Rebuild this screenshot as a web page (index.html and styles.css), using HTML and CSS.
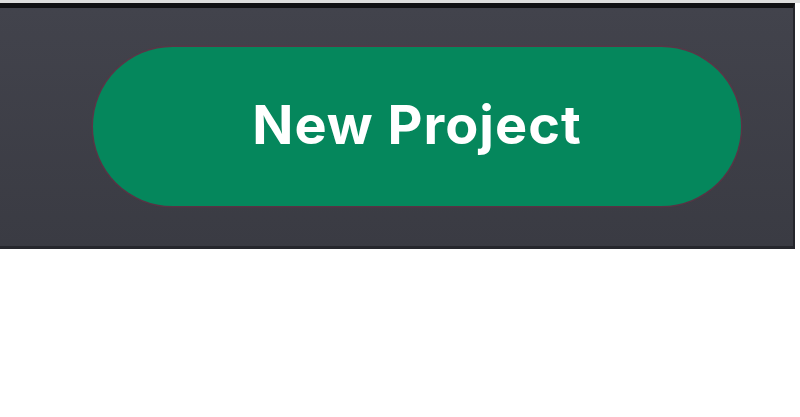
FILE: index.html
```html
<!DOCTYPE html>
<html>
<head>
<meta charset="utf-8">
<link rel="stylesheet" href="styles.css">
</head>
<body>
<div class="page">
  <header class="toolbar">
    <button class="new-project">New Project</button>
  </header>
</div>
</body>
</html>
```
FILE: styles.css
```css
html, body {
  margin: 0;
  padding: 0;
  background: #ffffff;
}
.page {
  border-top: 3px solid #dedede;
  width: 800px;
}
.toolbar {
  box-sizing: border-box;
  width: 795px;
  border-top: 5px solid #111114;
  border-right: 2px solid #25262c;
  border-bottom: 3px solid #26272d;
  background: linear-gradient(#42434c, #3a3b43);
  padding: 39px 0 40px 93px;
  display: flex;
}
.new-project {
  width: 648px;
  height: 159px;
  border-radius: 80px;
  border: none;
  background: #05875c;
  box-shadow: 0 0 0 1.5px rgba(110, 45, 70, 0.55);
  color: #ffffff;
  font-family: "Inter", "Open Sans", sans-serif;
  font-weight: 700;
  font-size: 54px;
  letter-spacing: 1px;
  padding: 0 0 4px 0;
  cursor: pointer;
}
```
